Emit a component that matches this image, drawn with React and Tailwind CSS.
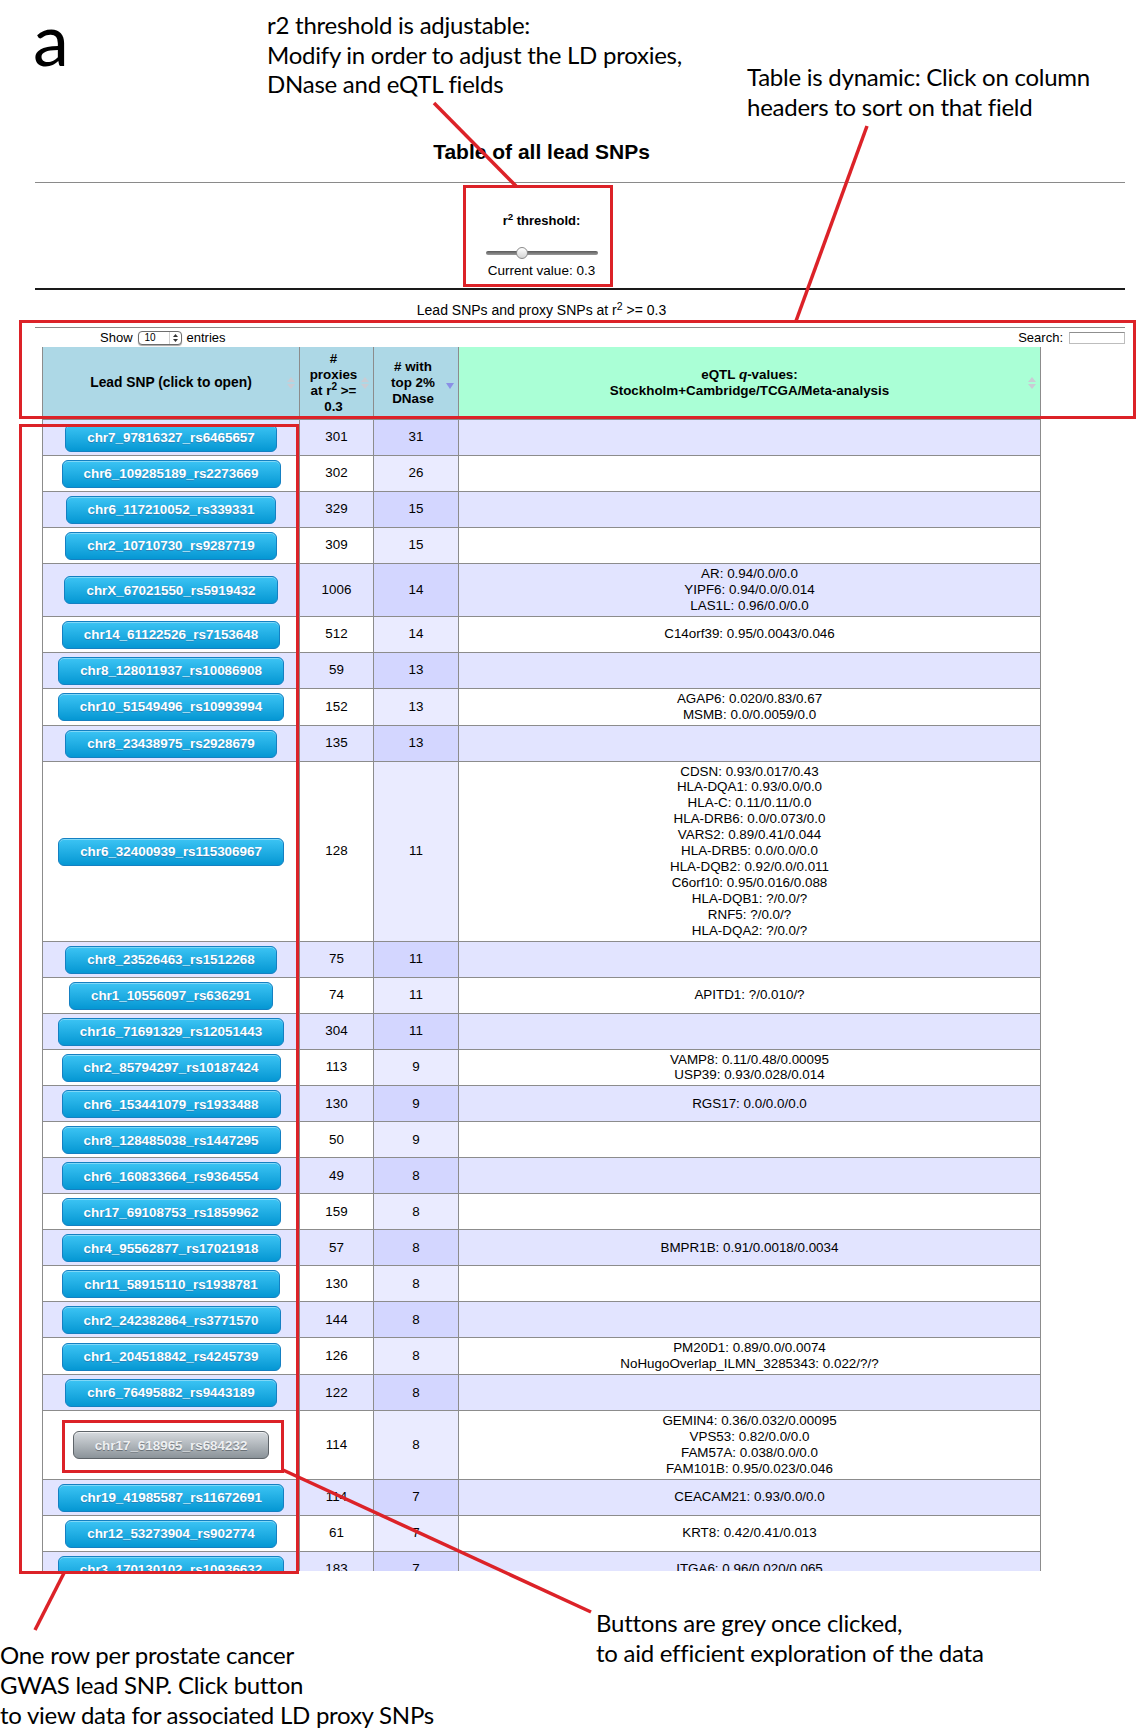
import React from "react";

const rows = [
  ["chr7_97816327_rs6465657", "301", "31", []],
  ["chr6_109285189_rs2273669", "302", "26", []],
  ["chr6_117210052_rs339331", "329", "15", []],
  ["chr2_10710730_rs9287719", "309", "15", []],
  ["chrX_67021550_rs5919432", "1006", "14", ["AR: 0.94/0.0/0.0", "YIPF6: 0.94/0.0/0.014", "LAS1L: 0.96/0.0/0.0"]],
  ["chr14_61122526_rs7153648", "512", "14", ["C14orf39: 0.95/0.0043/0.046"]],
  ["chr8_128011937_rs10086908", "59", "13", []],
  ["chr10_51549496_rs10993994", "152", "13", ["AGAP6: 0.020/0.83/0.67", "MSMB: 0.0/0.0059/0.0"]],
  ["chr8_23438975_rs2928679", "135", "13", []],
  ["chr6_32400939_rs115306967", "128", "11", [
    "CDSN: 0.93/0.017/0.43",
    "HLA-DQA1: 0.93/0.0/0.0",
    "HLA-C: 0.11/0.11/0.0",
    "HLA-DRB6: 0.0/0.073/0.0",
    "VARS2: 0.89/0.41/0.044",
    "HLA-DRB5: 0.0/0.0/0.0",
    "HLA-DQB2: 0.92/0.0/0.011",
    "C6orf10: 0.95/0.016/0.088",
    "HLA-DQB1: ?/0.0/?",
    "RNF5: ?/0.0/?",
    "HLA-DQA2: ?/0.0/?",
  ]],
  ["chr8_23526463_rs1512268", "75", "11", []],
  ["chr1_10556097_rs636291", "74", "11", ["APITD1: ?/0.010/?"]],
  ["chr16_71691329_rs12051443", "304", "11", []],
  ["chr2_85794297_rs10187424", "113", "9", ["VAMP8: 0.11/0.48/0.00095", "USP39: 0.93/0.028/0.014"]],
  ["chr6_153441079_rs1933488", "130", "9", ["RGS17: 0.0/0.0/0.0"]],
  ["chr8_128485038_rs1447295", "50", "9", []],
  ["chr6_160833664_rs9364554", "49", "8", []],
  ["chr17_69108753_rs1859962", "159", "8", []],
  ["chr4_95562877_rs17021918", "57", "8", ["BMPR1B: 0.91/0.0018/0.0034"]],
  ["chr11_58915110_rs1938781", "130", "8", []],
  ["chr2_242382864_rs3771570", "144", "8", []],
  ["chr1_204518842_rs4245739", "126", "8", ["PM20D1: 0.89/0.0/0.0074", "NoHugoOverlap_ILMN_3285343: 0.022/?/?"]],
  ["chr6_76495882_rs9443189", "122", "8", []],
  ["chr17_618965_rs684232", "114", "8", ["GEMIN4: 0.36/0.032/0.00095", "VPS53: 0.82/0.0/0.0", "FAM57A: 0.038/0.0/0.0", "FAM101B: 0.95/0.023/0.046"], true],
  ["chr19_41985587_rs11672691", "114", "7", ["CEACAM21: 0.93/0.0/0.0"]],
  ["chr12_53273904_rs902774", "61", "7", ["KRT8: 0.42/0.41/0.013"]],
  ["chr3_170130102_rs10936632", "183", "7", ["ITGA6: 0.96/0.020/0.065"]],
];

function SortBoth() {
  return (
    <svg className="absolute right-[4px] top-1/2 -translate-y-1/2" width="8" height="14" viewBox="0 0 8 14">
      <path d="M0 6 L4 1 L8 6 Z" fill="#c9ccd4" />
      <path d="M0 8 L4 13 L8 8 Z" fill="#c9ccd4" />
    </svg>
  );
}

function SortDesc() {
  return (
    <svg className="absolute right-[4px] top-[36px]" width="8" height="6" viewBox="0 0 8 6">
      <path d="M0 0 L8 0 L4 6 Z" fill="#8a8fe6" />
    </svg>
  );
}

function SnpButton({ label, grey }) {
  const cls = grey
    ? "h-[28px] px-[21px] rounded-[6px] border border-[#5e6469] bg-[linear-gradient(to_bottom,#d6dade,#8b9399)] text-[#eef0f2] font-bold text-[13.4px] leading-none [text-shadow:0_1px_0_#6a7177] shadow-[inset_0_1px_0_rgba(255,255,255,0.6)]"
    : "h-[28px] px-[21px] rounded-[6px] border border-[#1580c2] bg-[linear-gradient(to_bottom,#3cc4f4,#0597d3)] text-white font-bold text-[13.4px] leading-none [text-shadow:0_1px_0_#2a82b8] shadow-[inset_0_1px_0_rgba(255,255,255,0.35)]";
  return <button className={cls}>{label}</button>;
}

export default function App() {
  return (
    <div className="relative w-[1137px] h-[1729px] overflow-hidden bg-white text-black font-['Liberation_Sans',Arial,Helvetica,sans-serif]">
      {/* top annotations */}
      <div className="flex h-[140px] font-[Lato,'Open_Sans',sans-serif]">
        <div className="w-[267px] pl-[33px] text-[72px] leading-[76px]">a</div>
        <div className="w-[480px] pt-[10px] text-[24px] leading-[29.5px] tracking-[-0.25px]">
          <div>r2 threshold is adjustable:</div>
          <div>Modify in order to adjust the LD proxies,</div>
          <div>DNase and eQTL fields</div>
        </div>
        <div className="pt-[62px] text-[24px] leading-[29.5px] tracking-[-0.25px]">
          <div>Table is dynamic: Click on column</div>
          <div>headers to sort on that field</div>
        </div>
      </div>

      {/* title */}
      <div className="ml-[42px] w-[999px] text-center font-bold text-[21px] leading-[24px]">Table of all lead SNPs</div>
      <div className="mt-[18px] ml-[35px] w-[1090px] h-px bg-[#8a8a8a]" />

      {/* threshold */}
      <div className="ml-[42px] w-[999px] flex flex-col items-center">
        <div className="mt-[30px] font-bold text-[13px] leading-[16px]">
          r<sup>2</sup> threshold:
        </div>
        <div className="mt-[18px] relative w-[112px] h-[12px]">
          <div className="absolute left-0 right-0 top-[4px] h-[4px] rounded-full bg-[linear-gradient(to_bottom,#5a5a5a,#9a9a9a)]" />
          <div className="absolute left-[30px] top-0 w-[12px] h-[12px] rounded-full border border-[#8a8a8a] bg-[linear-gradient(to_bottom,#ffffff,#d4d4d4)]" />
        </div>
        <div className="mt-[4px] text-[13.5px] leading-[16px]">Current value: 0.3</div>
      </div>
      <div className="mt-[9px] ml-[35px] w-[1090px] h-[2px] bg-[#1a1a1a]" />

      <div className="mt-[12px] ml-[42px] w-[999px] text-center text-[14px] leading-[16px]">
        Lead SNPs and proxy SNPs at r<sup>2</sup> &gt;= 0.3
      </div>
      <div className="mt-[9px] ml-[35px] w-[1090px] h-px bg-[#8a8a8a]" />

      {/* controls */}
      <div className="ml-[35px] w-[1090px] h-[19px] flex items-center justify-between text-[13px] leading-none">
        <div className="ml-[65px] flex items-center">
          <span>Show</span>
          <div className="ml-[5px] mr-[5px] w-[44px] h-[14px] rounded-[4px] border border-[#6e6e6e] bg-white shadow-[0_1px_1px_rgba(0,0,0,0.35)] flex items-center justify-between pl-[6px] pr-[3px]">
            <span className="text-[10px]">10</span>
            <div className="flex items-center h-full border-l border-[#d0d0d0] pl-[3px]">
              <svg width="5" height="8" viewBox="0 0 5 8">
                <path d="M0 3 L2.5 0 L5 3 Z" fill="#333" />
                <path d="M0 5 L2.5 8 L5 5 Z" fill="#333" />
              </svg>
            </div>
          </div>
          <span>entries</span>
        </div>
        <div className="flex items-center">
          <span>Search:</span>
          <div className="ml-[6px] w-[56px] h-[12px] border border-[#bdbdbd] border-t-[#8f8f8f] bg-white" />
        </div>
      </div>

      {/* table */}
      <div className="ml-[42px] w-[999px] h-[1224px] overflow-hidden">
        <table className="w-[999px] table-fixed border-collapse text-[13.4px]">
          <colgroup>
            <col className="w-[257px]" />
            <col className="w-[74px]" />
            <col className="w-[85px]" />
            <col />
          </colgroup>
          <thead>
            <tr className="h-[72px]">
              <th className="relative bg-[#add8e6] border border-t-0 border-[#8c8c8c] font-bold text-[13.8px] leading-[16px] py-[4px] text-center align-middle">
                Lead SNP (click to open)
                <SortBoth />
              </th>
              <th className="relative bg-[#add8e6] border border-t-0 border-[#8c8c8c] font-bold leading-[16px] py-[4px] pr-[6px] text-center align-middle">
                #<br />proxies<br />at r<sup>2</sup> &gt;=<br />0.3
                <SortBoth />
              </th>
              <th className="relative bg-[#add8e6] border border-t-0 border-[#8c8c8c] font-bold leading-[16px] py-[4px] pr-[6px] text-center align-middle">
                # with<br />top 2%<br />DNase
                <SortDesc />
              </th>
              <th className="relative bg-[#aaffd6] border border-t-0 border-[#8c8c8c] font-bold leading-[16px] py-[4px] text-center align-middle">
                eQTL <i>q</i>-values:<br />Stockholm+Cambridge/TCGA/Meta-analysis
                <SortBoth />
              </th>
            </tr>
          </thead>
          <tbody>
            {rows.map(([snp, prox, dnase, eqtl, grey], i) => {
              const odd = i % 2 === 0;
              const bg = odd ? "bg-[#e2e4ff]" : "bg-white";
              const sortBg = odd ? "bg-[#d3d6ff]" : "bg-[#eaebff]";
              return (
                <tr key={snp} className={bg}>
                  <td className="border border-[#8c8c8c] pt-[4px] pb-[3px] align-middle">
                    <div className="flex justify-center">
                      <SnpButton label={snp} grey={grey} />
                    </div>
                  </td>
                  <td className="border border-[#8c8c8c] text-center align-middle">{prox}</td>
                  <td className={`border border-[#8c8c8c] text-center align-middle ${sortBg}`}>{dnase}</td>
                  <td className="border border-[#8c8c8c] text-center align-middle py-[2px] leading-[15.9px]">
                    {eqtl.map((l) => (
                      <div key={l}>{l}</div>
                    ))}
                  </td>
                </tr>
              );
            })}
          </tbody>
        </table>
      </div>

      {/* bottom annotations */}
      <div className="flex items-start font-[Lato,'Open_Sans',sans-serif] text-[24px] leading-[30px] tracking-[-0.25px]">
        <div className="w-[596px] mt-[69px]">
          <div>One row per prostate cancer</div>
          <div>GWAS lead SNP. Click button</div>
          <div>to view data for associated LD proxy SNPs</div>
        </div>
        <div className="mt-[37px]">
          <div>Buttons are grey once clicked,</div>
          <div>to aid efficient exploration of the data</div>
        </div>
      </div>

      {/* red callout boxes (overlay) */}
      <div className="absolute left-[463px] top-[185px] w-[150px] h-[102px] border-[3px] border-[#dc2228] pointer-events-none" />
      <div className="absolute left-[19px] top-[320px] w-[1117px] h-[99px] border-[3px] border-[#dc2228] pointer-events-none" />
      <div className="absolute left-[19px] top-[424px] w-[280px] h-[1150px] border-[3px] border-[#dc2228] pointer-events-none" />
      <div className="absolute left-[62px] top-[1420px] w-[222px] h-[53px] border-[3px] border-[#dc2228] pointer-events-none" />

      {/* red callout lines */}
      <svg className="absolute left-0 top-0 pointer-events-none" width="1137" height="1729" viewBox="0 0 1137 1729">
        <g stroke="#dc2228" strokeWidth="3.5" strokeLinecap="butt">
          <line x1="434" y1="103" x2="516" y2="186" />
          <line x1="867" y1="126" x2="796" y2="321" />
          <line x1="64" y1="1573" x2="35" y2="1630" />
          <line x1="283" y1="1470" x2="591" y2="1612" />
        </g>
      </svg>
    </div>
  );
}
